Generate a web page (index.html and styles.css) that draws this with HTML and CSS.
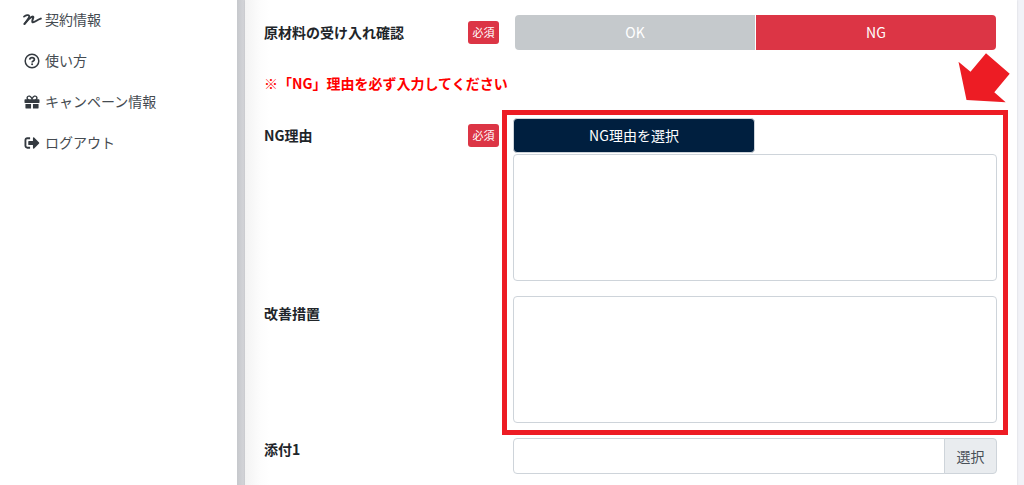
FILE: index.html
```
<!DOCTYPE html>
<html lang="ja">
<head>
	<meta charset="UTF-8">
	<meta name="viewport" content="width=device-width, initial-scale=1">
	<title>原材料の受け入れ確認</title>
	<link rel="stylesheet" href="styles.css">
</head>
<body>
	<div class="layout">
		<nav class="sidebar">
			<a class="nav-link" href="#">
				<svg class="icon" viewBox="0 0 20 16" fill="none" stroke="currentColor" stroke-linecap="round" stroke-linejoin="round">
					<path stroke-width="1.8" d="M2 4.6C4 3 6.6 2.6 7.2 3.8C7.8 5.4 5.2 8.4 2.4 12"/>
					<path stroke-width="2" d="M2.6 11.8C5.4 8.4 9 4.8 11 4.6C12.2 5 9.6 8.4 10.4 10C11.8 11.4 14.4 8 18.8 6.6"/>
				</svg>
				契約情報
			</a>
			<a class="nav-link" href="#">
				<svg class="icon" viewBox="0 0 20 16" fill="none" stroke="currentColor">
					<circle cx="10" cy="8" r="6.8" stroke-width="1.5"/>
					<path stroke-width="1.7" d="M7.7 6.6C7.9 5.2 8.8 4.6 10 4.6C11.4 4.6 12.4 5.4 12.4 6.5C12.4 8 10.1 7.9 10.1 9.6"/>
					<circle cx="10.1" cy="11.3" r="1" fill="currentColor" stroke="none"/>
				</svg>
				使い方
			</a>
			<a class="nav-link" href="#">
				<svg class="icon" viewBox="-69 -17 650 546" fill="currentColor">
					<path d="M32 448c0 17.7 14.3 32 32 32h160V320H32v128zm256 32h160c17.7 0 32-14.3 32-32V320H288v160zm192-320h-42.1c6.2-12.1 10.1-25.5 10.1-40 0-48.5-39.5-88-88-88-41.6 0-68.5 21.3-103 68.3-34.5-47-61.4-68.3-103-68.3-48.5 0-88 39.5-88 88 0 14.5 3.8 27.9 10.1 40H32c-17.7 0-32 14.3-32 32v80c0 8.8 7.2 16 16 16h480c8.8 0 16-7.2 16-16v-80c0-17.7-14.3-32-32-32zm-326.1 0c-22.1 0-40-17.9-40-40s17.9-40 40-40c19.9 0 34.6 3.3 86.1 80h-86.1zm206.1 0h-86.1c51.4-76.5 65.7-80 86.1-80 22.1 0 40 17.9 40 40s-17.9 40-40 40z"/>
				</svg>
				キャンペーン情報
			</a>
			<a class="nav-link" href="#">
				<svg class="icon" viewBox="-69 -17 650 546" fill="currentColor">
					<path d="M497 273L329 441c-15 15-41 4.5-41-17v-96H152c-13.3 0-24-10.7-24-24v-96c0-13.3 10.7-24 24-24h136V88c0-21.4 25.9-32 41-17l168 168c9.3 9.4 9.3 24.6 0 34zM192 436v-40c0-6.6-5.4-12-12-12H96c-17.7 0-32-14.3-32-32V160c0-17.7 14.3-32 32-32h84c6.6 0 12-5.4 12-12V76c0-6.6-5.4-12-12-12H96c-53 0-96 43-96 96v192c0 53 43 96 96 96h84c6.6 0 12-5.4 12-12z"/>
				</svg>
				ログアウト
			</a>
		</nav>

		<main class="content">
			<form class="card">
				<div class="row">
					<div class="label">
						<span id="check-label">原材料の受け入れ確認</span>
						<span class="badge">必須</span>
					</div>
					<div class="btn-group" role="group" aria-labelledby="check-label">
						<button type="button" class="btn btn-off">OK</button>
						<button type="button" class="btn btn-ng">NG</button>
					</div>
				</div>

				<p class="notice">※「NG」理由を必ず入力してください</p>

				<div class="reason">
					<div class="row">
						<div class="label">
							<label for="ng-reason">NG理由</label>
							<span class="badge">必須</span>
						</div>
						<div class="field">
							<button type="button" class="btn btn-select">NG理由を選択</button>
							<textarea class="control" id="ng-reason"></textarea>
						</div>
					</div>
					<div class="row">
						<div class="label">
							<label for="action">改善措置</label>
						</div>
						<div class="field">
							<textarea class="control" id="action"></textarea>
						</div>
					</div>
					<div class="highlight"></div>
					<svg class="arrow" viewBox="0 0 52 50">
						<path fill="#ed1c24" d="M0.5 8.7L12.5 18.7L28 0.3L51.7 20.7L36.3 39.3L47.7 49.3L8.5 47Z"/>
					</svg>
				</div>

				<div class="row">
					<div class="label label-file">
						<label for="file1">添付1</label>
					</div>
					<div class="input-group">
						<input class="control" type="text" id="file1">
						<button type="button" class="addon">選択</button>
					</div>
				</div>
			</form>
		</main>
	</div>
</body>
</html>
```
FILE: styles.css
```
* {
	box-sizing: border-box;
}
body {
	margin: 0;
	background: #f1f2f7;
	color: #212529;
	font-family: "Noto Sans CJK JP", sans-serif;
	font-size: 14px;
	line-height: 21px;
	overflow: hidden;
}
button, input, textarea {
	margin: 0;
	font: inherit;
}
.layout {
	display: flex;
	min-height: 100vh;
}

/* sidebar */
.sidebar {
	flex: 0 0 237px;
	background: #fff;
}
.nav-link {
	display: flex;
	align-items: center;
	gap: 3px;
	height: 41px;
	padding: 0 0 2px 22px;
	color: #454b51;
	text-decoration: none;
}
.icon {
	width: 20px;
	height: 16px;
	color: #343a40;
}

/* form */
.content {
	flex: 1;
	padding: 0 7px 0 8px;
	background: linear-gradient(to right, #c6c8cc, #d5d6da 8px, #f1f2f7 8px);
}
.card {
	height: 100%;
	padding: 15px 20px 11px 19px;
	background: linear-gradient(to right, #f3f3f3, #fcfcfc 14px, #fff 24px);
	box-shadow: 0 0 2px rgba(0, 0, 0, 0.12);
}
.row {
	display: grid;
	grid-template-columns: 249px 1fr;
	margin-bottom: 15px;
}
.label {
	display: flex;
	justify-content: space-between;
	align-items: center;
	height: 35px;
	padding-right: 14px;
	font-weight: bold;
}
.label-file {
	height: 22px;
}
.badge {
	min-width: 31px;
	border-radius: 3px;
	background: #dc3545;
	color: #fff;
	font-size: 11px;
	font-weight: normal;
	line-height: 23px;
	text-align: center;
}
.notice {
	margin: 23px 0 24px;
	color: #f00;
	font-weight: bold;
}
.btn {
	height: 35px;
	padding: 0;
	border: 1px solid #ced4da;
	border-radius: 4px;
	color: #fff;
}
.btn-group {
	display: flex;
	gap: 1px;
	padding: 0 1px 0 2px;
}
.btn-group .btn {
	flex: 1;
	border: 0;
}
.btn-group .btn-off {
	border-radius: 4px 0 0 4px;
	background: #c5c9cc;
}
.btn-group .btn-ng {
	border-radius: 0 4px 4px 0;
	background: #dc3545;
}
.btn-select {
	width: 50%;
	background: #001f3f;
}
.field {
	display: flex;
	flex-direction: column;
	align-items: flex-start;
	gap: 1px;
}
.control {
	width: 100%;
	border: 1px solid #ced4da;
	border-radius: 4px;
	background: #fff;
	color: #495057;
	resize: none;
}
textarea.control {
	height: 127px;
}
.input-group {
	display: flex;
	height: 36px;
}
.input-group .control {
	flex: 1;
	min-width: 0;
	border-radius: 4px 0 0 4px;
}
.addon {
	width: 53px;
	margin-left: -1px;
	padding: 0;
	border: 1px solid #ced4da;
	border-radius: 0 4px 4px 0;
	background: #e9ecef;
	color: #495057;
}

/* red frame and arrow around the fields that must be filled in */
.reason {
	position: relative;
}
.highlight {
	position: absolute;
	inset: -8px -11px -12px 238px;
	border: 5px solid #ed1c24;
	pointer-events: none;
}
.arrow {
	position: absolute;
	top: -65px;
	right: -13px;
	width: 52px;
	height: 50px;
}
```
